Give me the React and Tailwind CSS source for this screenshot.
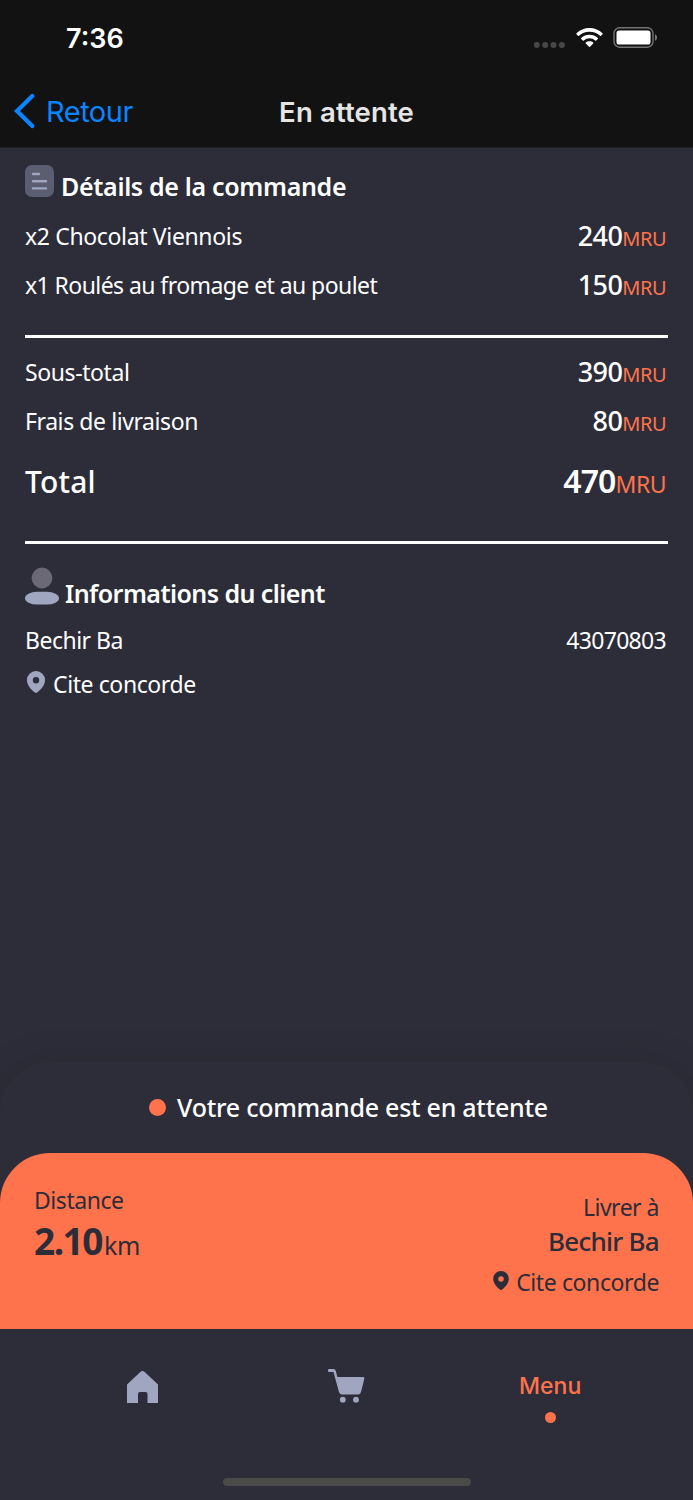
import React from 'react';

const items = [
  { name: 'x2 Chocolat Viennois', price: '240', tracking: 'tracking-[-0.35px]' },
  { name: 'x1 Roulés au fromage et au poulet', price: '150', tracking: 'tracking-[-0.57px]' }
];

const fees = [
  { name: 'Sous-total', price: '390', tracking: 'tracking-[-0.4px]' },
  { name: 'Frais de livraison', price: '80', tracking: 'tracking-[-0.42px]' }
];

function PinIcon({ className }) {
  return (
    <svg className={className} viewBox="0 0 18 22" fill="currentColor">
      <path
        fillRule="evenodd"
        d="M9 0a9 9 0 0 1 9 9.200c0 5-4 9.300-8 12.400a1.600 1.600 0 0 1-2 0C4 18.500 0 14.200 0 9.200A9 9 0 0 1 9 0Zm0 6a3.200 3.200 0 1 0 0 6.400A3.200 3.200 0 0 0 9 6Z"
      />
    </svg>
  );
}

function StatusBar() {
  return (
    <div className="h-[75px] flex items-center justify-between pl-[66px] pr-[35px]">
      <span className="pt-[2px] text-[27px] font-semibold leading-8 text-white">7:36</span>
      <div className="flex items-center">
        <svg className="w-[32px] h-[6px] mt-[14px]" viewBox="0 0 32 6" fill="#474747">
          <circle cx="2.700" cy="3" r="3" />
          <circle cx="11.200" cy="3" r="3" />
          <circle cx="19.500" cy="3" r="3" />
          <circle cx="27.900" cy="3" r="3" />
        </svg>
        <svg className="w-[27px] h-[20px] ml-[10px]" viewBox="0 0 27 20" fill="#fff">
          <path d="M13.500 0C18.600 0 23.200 2 26.500 5.200q.5.500 0 1l-1.500 1.600q-.5.400-1 0A15.200 15.200 0 0 0 13.500 3.800 15.200 15.200 0 0 0 3 7.800q-.5.400-1 0L.5 6.200q-.5-.5 0-1C3.800 2 8.400 0 13.500 0Z" />
          <path d="M13.500 6.700c3.200 0 6.100 1.200 8.300 3.200q.5.500 0 1l-1.600 1.600q-.5.400-1 0a8.600 8.600 0 0 0-11.400 0q-.5.400-1 0l-1.600-1.600q-.5-.5 0-1a12.300 12.300 0 0 1 8.300-3.200Z" />
          <path d="M13.500 13.200c1.400 0 2.700.5 3.700 1.300q.5.500 0 1l-3.200 3.300q-.5.500-1 0l-3.200-3.300q-.5-.5 0-1c1-.8 2.300-1.300 3.700-1.300Z" />
        </svg>
        <svg className="w-[45px] h-[21px] ml-[10px]" viewBox="0 0 45 21">
          <rect x="1" y=".8" width="39" height="19.400" rx="5.500" fill="none" stroke="#737373" strokeWidth="1.400" />
          <rect x="3.500" y="3.400" width="34" height="14.200" rx="2.600" fill="#fff" />
          <path d="M42 7.200c1.300.6 2 1.900 2 3.300s-.7 2.700-2 3.300Z" fill="#7b7b7b" />
        </svg>
      </div>
    </div>
  );
}

function Header() {
  return (
    <header className="h-[148px] bg-[#121212] border-b border-[#202020] font-['Inter',sans-serif]">
      <StatusBar />
      <div className="h-[72px] grid grid-cols-3 items-center">
        <button className="flex items-center pl-[14px] text-[#0a84ff]">
          <svg className="w-[21px] h-[36px]" viewBox="0 0 21 36" fill="none" stroke="currentColor" strokeWidth="4.200" strokeLinecap="round">
            <path d="M18.300 3 3 18l15.300 15" strokeLinejoin="miter" />
          </svg>
          <span className="ml-[11px] pt-px text-[29px] leading-9 tracking-[-0.5px]">Retour</span>
        </button>
        <h1 className="pt-px text-center text-[27.5px] leading-9 font-semibold tracking-[0.15px] text-[#e5e5e5] whitespace-nowrap">En attente</h1>
      </div>
    </header>
  );
}

function PriceRow({ row }) {
  return (
    <div className="h-[49.5px] flex items-center justify-between">
      <span className={`text-[23px] ${row.tracking}`}>{row.name}</span>
      <span className="flex items-baseline pr-[2px]">
        <span className="text-[27px] font-medium tracking-[-0.6px]">{row.price}</span>
        <span className="text-[20px] text-[#ff734c] tracking-[-0.5px]">MRU</span>
      </span>
    </div>
  );
}

function OrderDetails() {
  return (
    <main className="h-[914px] px-[25px] text-white">
      <div className="h-[63px] pt-[17px] flex">
        <svg className="w-[29px] h-[32px]" viewBox="0 0 29 32">
          <rect width="29" height="32" rx="7" fill="#5b5d70" />
          <path d="M8 9h6M8 16.200h13M8 23.400h13" stroke="#a0a5c0" strokeWidth="2.400" strokeLinecap="round" />
        </svg>
        <h2 className="ml-[7px] mt-[3px] text-[25px] leading-9 font-semibold tracking-[-0.33px] whitespace-nowrap">Détails de la commande</h2>
      </div>

      {items.map(item => (
        <PriceRow key={item.name} row={item} />
      ))}

      <div className="h-[3px] mt-[25px] bg-white" />

      <div className="pt-[9px]">
        {fees.map(fee => (
          <PriceRow key={fee.name} row={fee} />
        ))}
      </div>

      <div className="h-[70px] flex items-center justify-between">
        <span className="text-[30px] font-medium tracking-[0.2px]">Total</span>
        <span className="flex items-baseline pr-[2px]">
          <span className="text-[32px] font-semibold tracking-[-0.9px]">470</span>
          <span className="text-[23px] text-[#ff734c] tracking-[-0.5px]">MRU</span>
        </span>
      </div>

      <div className="h-[3px] mt-[25px] bg-white" />

      <div className="h-[73px] pt-[23px] flex">
        <svg className="w-[34px] h-[38px]" viewBox="0 0 34 38">
          <circle cx="17" cy="11" r="10.400" fill="#6b6976" />
          <rect y="24.800" width="34" height="12.700" rx="12" ry="6.350" fill="#a0a5c0" />
        </svg>
        <h2 className="ml-[6px] mt-[8px] text-[25px] leading-9 font-semibold tracking-[-0.57px] whitespace-nowrap">Informations du client</h2>
      </div>

      <div className="h-[46px] flex items-center justify-between text-[23px]">
        <span className="tracking-[-0.5px]">Bechir Ba</span>
        <span className="pr-[2px] tracking-[-0.7px]">43070803</span>
      </div>
      <div className="h-[42px] flex items-center text-[23px]">
        <PinIcon className="w-[18px] h-[22px] ml-[2px] mb-[4px] text-[#a0a5c0]" />
        <span className="ml-2 tracking-[-0.4px]">Cite concorde</span>
      </div>
    </main>
  );
}

function DeliveryPanel() {
  return (
    <section className="h-[267px] rounded-t-[50px] bg-[#2d2d39] shadow-[0_0_40px_rgba(0,0,0,0.1)]">
      <div className="h-[91px] flex items-center justify-center pl-1">
        <span className="w-[17px] h-[17px] rounded-full bg-[#ff734c]" />
        <p className="ml-[11px] text-[25px] font-medium tracking-[-0.26px] text-white whitespace-nowrap">Votre commande est en attente</p>
      </div>
      <div className="h-[176px] rounded-t-[50px] bg-[#ff734c] text-[#2d2d39] px-[34px] flex justify-between">
        <div className="pt-[29px]">
          <p className="text-[23px] leading-9 tracking-[-0.45px]">Distance</p>
          <p className="leading-[46px] flex items-baseline">
            <span className="text-[37px] font-bold tracking-[-1.5px]">2.10</span>
            <span className="text-[25px] ml-[2px] tracking-[-0.3px]">km</span>
          </p>
        </div>
        <div className="pt-[36px] flex flex-col items-end">
          <p className="text-[23px] leading-9 tracking-[-0.5px]">Livrer à</p>
          <p className="text-[26px] leading-8 font-medium tracking-[-0.75px]">Bechir Ba</p>
          <p className="mt-[7px] text-[23px] leading-9 flex items-center">
            <PinIcon className="w-[16px] h-[19px] mb-[4px]" />
            <span className="ml-[7px] tracking-[-0.4px]">Cite concorde</span>
          </p>
        </div>
      </div>
    </section>
  );
}

function TabBar() {
  return (
    <nav className="h-[171px] bg-[#2d2d39] flex flex-col justify-between items-center">
      <div className="w-full px-[41px] grid grid-cols-3 justify-items-center text-[#a0a5c0]">
        <svg className="w-[31px] h-[32px] mt-[42px]" viewBox="0 0 31 32" fill="currentColor">
          <path d="M0 13.500 13.300 1.100a3 3 0 0 1 4.400 0L31 13.500V32H20.500V23q0-2-2-2h-5.500q-2 0-2 2v9H0Z" />
        </svg>
        <svg className="w-[37px] h-[34px] mt-[40px]" viewBox="0 0 37 34" fill="currentColor">
          <path d="M1.200 0H5.500q1.800 0 2.300 1.700L9.300 8H35q1.700 0 1.300 1.700l-3.200 13Q32.500 25.500 30 25.500H14.500q-2.800 0-3.600-2.800L5.500 3H1.200a1.500 1.500 0 0 1 0-3Z" />
          <circle cx="14.800" cy="30.700" r="2.900" />
          <circle cx="28" cy="30.700" r="2.900" />
        </svg>
        <div className="mt-[41px] flex flex-col items-center text-[#ff734c] font-['Inter',sans-serif]">
          <span className="text-[23px] leading-8 font-medium">Menu</span>
          <span className="w-[11px] h-[11px] mt-[10px] rounded-full bg-current" />
        </div>
      </div>
      <div className="w-[248px] h-[8px] mb-[14px] rounded-full bg-[#4a4a49]" />
    </nav>
  );
}

function App() {
  return (
    <div className="w-[693px] h-[1500px] overflow-hidden bg-[#2d2d39] font-['Noto_Sans',sans-serif]">
      <Header />
      <OrderDetails />
      <DeliveryPanel />
      <TabBar />
    </div>
  );
}

export default App;
